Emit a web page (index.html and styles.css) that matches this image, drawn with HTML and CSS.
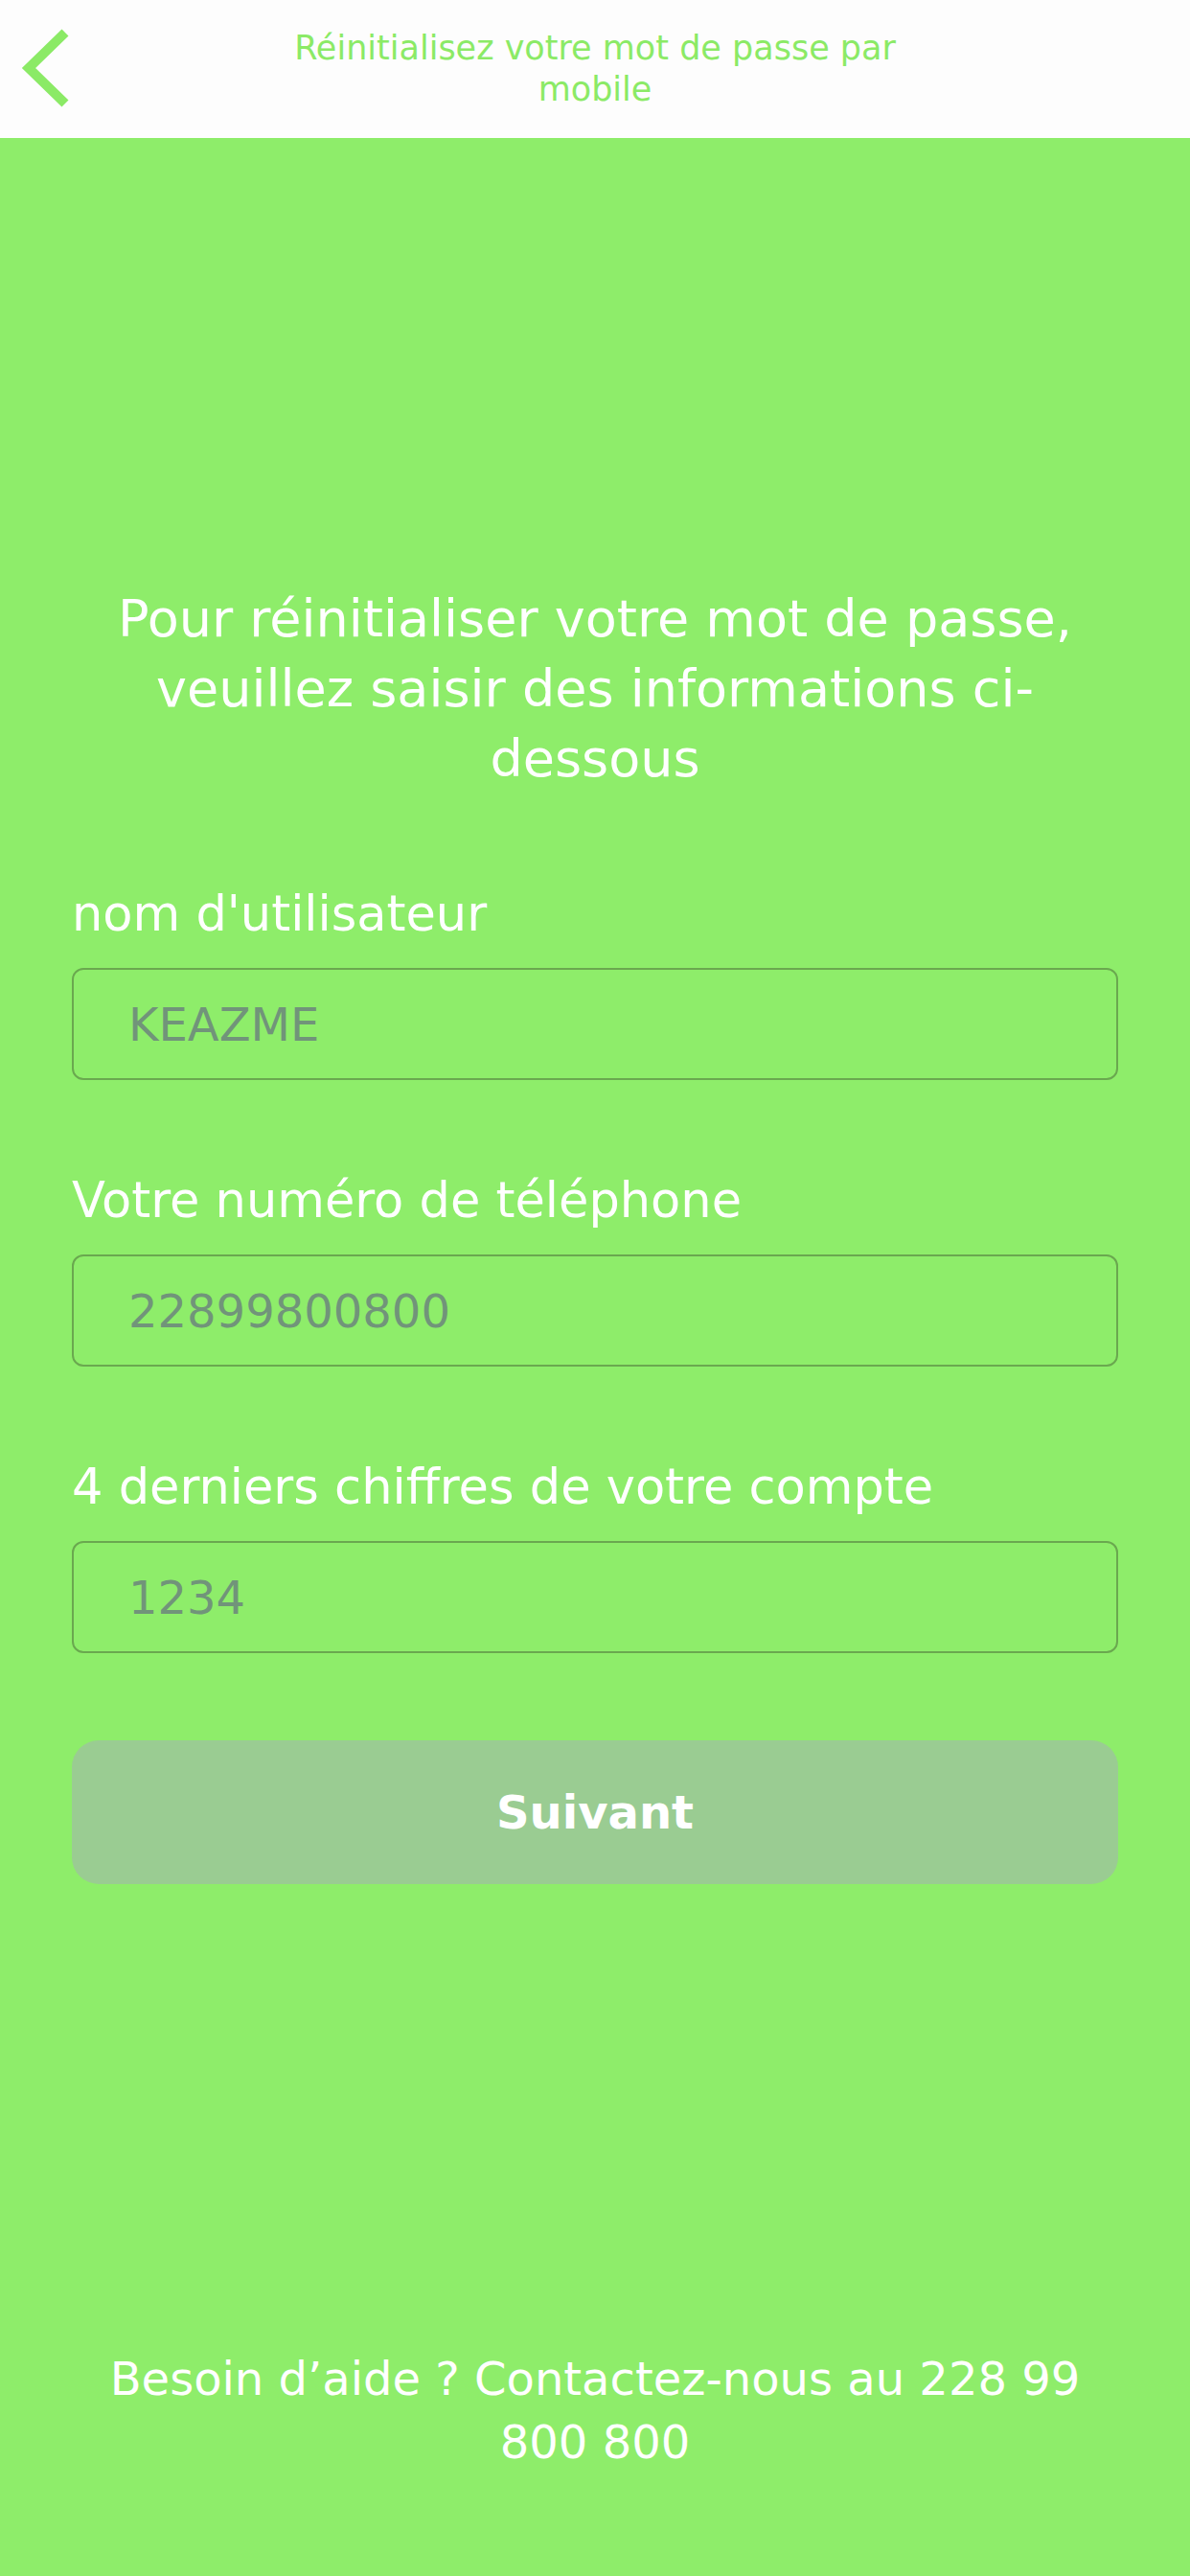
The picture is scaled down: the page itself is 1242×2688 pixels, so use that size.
FILE: index.html
```html
<!DOCTYPE html>
<html lang="fr">
<head>
  <meta charset="UTF-8">
  <meta name="viewport" content="width=device-width, initial-scale=1.0">
  <title>Réinitialisation du mot de passe</title>
  <link rel="stylesheet" href="styles.css">
</head>
<body>

<header class="top-bar">
  <a class="back-button" href="#" aria-label="Retour">
    <svg width="100" height="144" viewBox="0 0 100 144">
      <polyline points="68,34 30,71 68,108" fill="none" stroke="#8bea66" stroke-width="10"/>
    </svg>
  </a>
  <h1 class="top-title">Réinitialisez votre mot de passe par mobile</h1>
</header>

<main class="reset-form">
  <h2 class="intro">Pour réinitialiser votre mot de passe, veuillez saisir des informations ci-dessous</h2>

  <div class="field">
    <label for="username">nom d'utilisateur</label>
    <input id="username" type="text" placeholder="KEAZME">
  </div>

  <div class="field">
    <label for="phone">Votre numéro de téléphone</label>
    <input id="phone" type="tel" placeholder="22899800800">
  </div>

  <div class="field">
    <label for="account">4 derniers chiffres de votre compte</label>
    <input id="account" type="text" placeholder="1234">
  </div>

  <button class="next-button" type="button">Suivant</button>
</main>

<footer class="help">
  <p>Besoin d’aide ? Contactez-nous au 228 99 800 800</p>
</footer>

</body>
</html>
```

FILE: styles.css
```css
body {
  font-family: "DejaVu Sans", Verdana, sans-serif;
  background: #8eed6a;
  margin: 0;
  padding: 0;
  min-height: 100vh;
  display: flex;
  flex-direction: column;
  color: white;
}

/* Barre du haut */
.top-bar {
  height: 144px;
  background: #fdfdfd;
  display: flex;
  align-items: center;
}
.back-button {
  display: block;
  width: 100px;
  height: 144px;
}
.back-button svg {
  display: block;
}
.top-title {
  flex: 1;
  margin: 0 100px 0 0;
  padding: 0 180px;
  font-size: 35px;
  font-weight: normal;
  line-height: 43px;
  color: #8bea66;
  text-align: center;
}

/* Formulaire */
.reset-form {
  flex: 1;
  padding: 465px 75px 0;
}
.intro {
  margin: 0 0 96px;
  font-size: 54px;
  font-weight: normal;
  line-height: 73px;
  text-align: center;
}
.field {
  display: flex;
  flex-direction: column;
  gap: 26px;
  margin-bottom: 96px;
}
.field label {
  font-size: 51px;
  line-height: 60px;
}
.field input {
  box-sizing: border-box;
  height: 117px;
  padding: 0 57px;
  border: 2px solid #6aa84f;
  border-radius: 12px;
  background: transparent;
  font-family: inherit;
  font-size: 48px;
  color: #6f9473;
  outline: none;
}
.field input::placeholder {
  color: #71947a;
}
.field:last-of-type {
  margin-bottom: 91px;
}
.next-button {
  display: block;
  width: 100%;
  height: 150px;
  border: none;
  border-radius: 28px;
  background: #9acc92;
  color: white;
  font-family: inherit;
  font-size: 48px;
  font-weight: bold;
  cursor: pointer;
}

/* Aide en bas de page */
.help {
  padding: 0 90px 107px;
  text-align: center;
}
.help p {
  margin: 0;
  font-size: 48px;
  line-height: 66px;
}
```
